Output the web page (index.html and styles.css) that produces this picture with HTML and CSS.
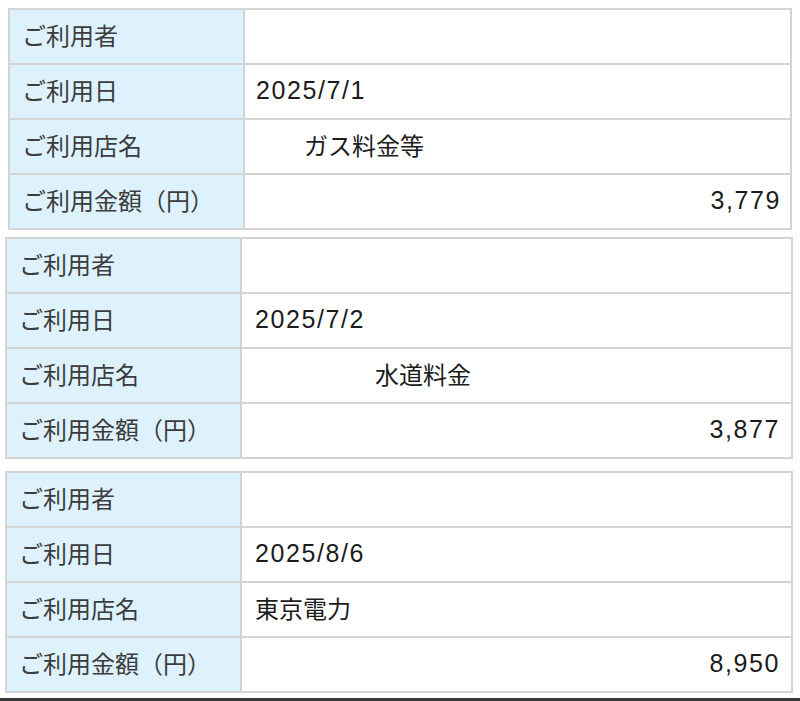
FILE: index.html
```html
<!DOCTYPE html>
<html lang="ja">
<head>
<meta charset="utf-8">
<title>ご利用明細</title>
<link rel="stylesheet" href="styles.css">
</head>
<body>
<div class="page">
  <div class="tbl t1">
    <div class="lbl">ご利用者</div><div class="val"></div>
    <div class="lbl">ご利用日</div><div class="val"><span class="lat">2025/7/1</span></div>
    <div class="lbl">ご利用店名</div><div class="val">　　ガス料金等</div>
    <div class="lbl">ご利用金額（円）</div><div class="val num"><span class="lat">3,779</span></div>
  </div>
  <div class="tbl t2">
    <div class="lbl">ご利用者</div><div class="val"></div>
    <div class="lbl">ご利用日</div><div class="val"><span class="lat">2025/7/2</span></div>
    <div class="lbl">ご利用店名</div><div class="val">　　　　　水道料金</div>
    <div class="lbl">ご利用金額（円）</div><div class="val num"><span class="lat">3,877</span></div>
  </div>
  <div class="tbl t3">
    <div class="lbl">ご利用者</div><div class="val"></div>
    <div class="lbl">ご利用日</div><div class="val"><span class="lat">2025/8/6</span></div>
    <div class="lbl">ご利用店名</div><div class="val">東京電力</div>
    <div class="lbl">ご利用金額（円）</div><div class="val num"><span class="lat">8,950</span></div>
  </div>
  <div class="bottombar"></div>
</div>
</body>
</html>
```
FILE: styles.css
```css
html, body {
  margin: 0;
  padding: 0;
  background: #ffffff;
}
body {
  font-family: "Noto Sans CJK JP", "Noto Sans", sans-serif;
  font-size: 24px;
}
.page {
  display: flex;
  flex-direction: column;
  padding-top: 8px;
  height: 701px;
  box-sizing: border-box;
  overflow: hidden;
}
.tbl {
  display: grid;
  grid-template-columns: 233px 1fr;
  grid-auto-rows: 53px;
  gap: 2px;
  background: #d4d4d4;
  border: 2px solid #d4d4d4;
  box-sizing: border-box;
}
.t1 {
  margin-left: 8px;
  width: 784px;
}
.t2 {
  margin-left: 5px;
  width: 788px;
  margin-top: 7px;
}
.t3 {
  margin-left: 5px;
  width: 788px;
  margin-top: 12px;
}
.lbl {
  background: #ddf2fc;
  color: #3c3c3c;
  display: flex;
  align-items: center;
  padding-left: 12px;
  padding-bottom: 4px;
  white-space: nowrap;
}
.val {
  background: #ffffff;
  color: #1c1c1c;
  display: flex;
  align-items: center;
  padding-left: 11px;
  padding-right: 10px;
  padding-bottom: 4px;
  white-space: pre;
}
.t2 .val, .t3 .val {
  padding-left: 13px;
  padding-right: 12px;
}
.lat {
  font-family: "Liberation Sans", Arial, sans-serif;
  font-size: 25px;
  letter-spacing: 1.6px;
  padding-top: 2px;
}
.num {
  justify-content: flex-end;
}
.num .lat {
  margin-right: -1px;
}
.bottombar {
  margin-top: auto;
  height: 3px;
  background: #3a3a3a;
}
```
